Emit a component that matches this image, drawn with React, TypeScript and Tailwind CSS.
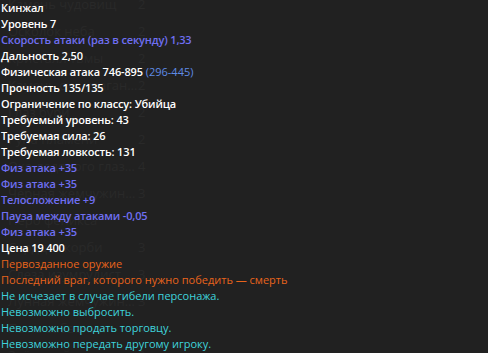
import React from 'react';

type Line = { text: string; extra?: string; tone: 'white' | 'blue' | 'orange' | 'cyan' };

const lines: Line[] = [
  { text: 'Кинжал', tone: 'white' },
  { text: 'Уровень 7', tone: 'white' },
  { text: 'Скорость атаки (раз в секунду) 1,33', tone: 'blue' },
  { text: 'Дальность 2,50', tone: 'white' },
  { text: 'Физическая атака 746-895', extra: '(296-445)', tone: 'white' },
  { text: 'Прочность 135/135', tone: 'white' },
  { text: 'Ограничение по классу: Убийца', tone: 'white' },
  { text: 'Требуемый уровень: 43', tone: 'white' },
  { text: 'Требуемая сила: 26', tone: 'white' },
  { text: 'Требуемая ловкость: 131', tone: 'white' },
  { text: 'Физ атака +35', tone: 'blue' },
  { text: 'Физ атака +35', tone: 'blue' },
  { text: 'Телосложение +9', tone: 'blue' },
  { text: 'Пауза между атаками -0,05', tone: 'blue' },
  { text: 'Физ атака +35', tone: 'blue' },
  { text: 'Цена 19 400', tone: 'white' },
  { text: 'Первозданное оружие', tone: 'orange' },
  { text: 'Последний враг, которого нужно победить — смерть', tone: 'orange' },
  { text: 'Не исчезает в случае гибели персонажа.', tone: 'cyan' },
  { text: 'Невозможно выбросить.', tone: 'cyan' },
  { text: 'Невозможно продать торговцу.', tone: 'cyan' },
  { text: 'Невозможно передать другому игроку.', tone: 'cyan' },
];

const toneClass: Record<Line['tone'], string> = {
  white: 'text-white font-semibold tracking-[-0.15px]',
  blue: 'text-[#6f6ff2] font-semibold tracking-[-0.15px]',
  orange: 'text-[#e8641c] font-medium',
  cyan: 'text-[#3fd3dc]',
};

// faded inventory list that shows through the tooltip
const ghostRows = [
  ['Камень чудовищ', '2'],
  ['Осколок неба', '2'],
  ['Кристалл тьмы', '2'],
  ['Камень сил урагана...', '2'],
  ['Глаз бури', '2'],
  ['Руна пламени', '2'],
  ['Око ледяного глазу...', '4'],
  ['Чёрная жемчужина...', '3'],
  ['Перо феникса', ''],
  ['Сердце скорби', '3'],
  ['Слеза изумрудиста и...', '3'],
  ['Лунная жемчужина...', '3'],
  ['Пыль забвения', '4'],
  ['Звёздный осколок', '3'],
];

export default function App() {
  return (
    <div className="relative w-[488px] h-[353px] overflow-hidden bg-[#212121] font-['Open_Sans',sans-serif] text-[11px] leading-[16px]">
      <div className="flex flex-col -mt-[10px] text-[#292929] text-[13px]">
        {ghostRows.map(([name, n], i) => (
          <div key={i} className="flex h-[27px] items-center">
            <span className="w-[138px] truncate pl-[8px]">{name}</span>
            <span>{n}</span>
          </div>
        ))}
      </div>
      <div className="absolute inset-0 flex flex-col pl-[1px] whitespace-nowrap">
        {lines.map((l, i) => (
          <div key={i} className={toneClass[l.tone]}>
            {l.text}
            {l.extra && <span className="font-normal tracking-normal text-[#5f8be6]"> {l.extra}</span>}
          </div>
        ))}
      </div>
    </div>
  );
}
